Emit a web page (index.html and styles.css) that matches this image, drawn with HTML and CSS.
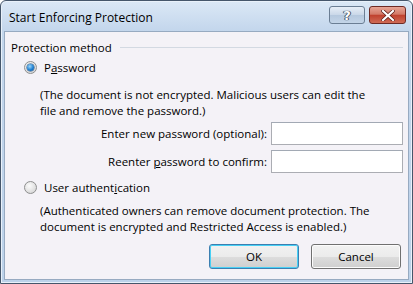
FILE: index.html
```html
<!DOCTYPE html>
<html>
<head>
<meta charset="utf-8">
<link rel="stylesheet" href="styles.css">
</head>
<body>
<div class="window">
  <div class="titlebar">
    <span class="title">Start Enforcing Protection</span>
    <div class="caption-buttons">
      <div class="cbtn help">?</div>
      <div class="cbtn close">
        <svg width="14" height="11" viewBox="0 0 14 11"><path d="M2 1 L12 10 M12 1 L2 10" stroke="#5a1a14" stroke-width="3.6" stroke-linecap="square"/><path d="M2 1 L12 10 M12 1 L2 10" stroke="#fff" stroke-width="2.2" stroke-linecap="square"/></svg>
      </div>
    </div>
  </div>
  <div class="content">
    <div class="group-head"><span>Protection method</span><div class="rule"></div></div>
    <div class="radio-row first"><span class="radio checked"></span><span>P<u>a</u>ssword</span></div>
    <p class="desc first-desc">(The document is not encrypted. Malicious users can edit the<br>file and remove the password.)</p>
    <div class="field-row"><label>Enter new password (optional):</label><div class="input"></div></div>
    <div class="field-row"><label>Reenter <u>p</u>assword to confirm:</label><div class="input"></div></div>
    <div class="radio-row"><span class="radio"></span><span>User authent<u>i</u>cation</span></div>
    <p class="desc">(Authenticated owners can remove document protection. The<br>document is encrypted and Restricted Access is enabled.)</p>
    <div class="buttons">
      <div class="btn default">OK</div>
      <div class="btn">Cancel</div>
    </div>
  </div>
</div>
</body>
</html>
```
FILE: styles.css
```css
html, body { margin: 0; padding: 0; background: #fff; }
body { font-family: "Open Sans", "Noto Sans", sans-serif; font-size: 11.5px; color: #000; }
.window {
  width: 413px; height: 284px; box-sizing: border-box;
  border: 1px solid #45566b; border-radius: 6px 6px 0 0;
  background: linear-gradient(#dbe8f6, #c3d6ec 30px, #bcd2ea);
  padding: 0 3px 3px 3px;
  display: flex; flex-direction: column;
  box-shadow: inset 0 0 0 1px #e9f1fa;
}
.titlebar { height: 30px; display: flex; align-items: center; padding-left: 5px; flex: none; }
.title { font-size: 12px; color: #000; margin-top: 2px; }
.caption-buttons { margin-left: auto; display: flex; gap: 4px; margin-right: 3px; margin-bottom: 2px; }
.cbtn {
  height: 18px; box-sizing: border-box; border: 1px solid #6b7e94; border-radius: 3px;
  display: flex; align-items: center; justify-content: center;
}
.help {
  width: 36px;
  background: linear-gradient(#e7eef7, #c9d7e8 50%, #b5c8de 51%, #c4d5e8);
  color: #fff; font-weight: bold; font-size: 13px; font-family: "DejaVu Sans", sans-serif;
  text-shadow: 0 0 1px #3d4d60, 0 0 1px #3d4d60, 1px 0 0 #4a5a6e, -1px 0 0 #4a5a6e;
}
.close {
  width: 37px; border-color: #6e2a24;
  background: linear-gradient(#e7a596, #d37a68 45%, #c0422f 52%, #cf6b55);
}
.content {
  flex: 1; background: #f4f2f7; border: 1px solid #97aac1;
  padding: 6px 0 0 6px; box-sizing: border-box;
}
.group-head { display: flex; align-items: center; height: 18px; }
.rule { flex: 1; height: 1px; background: #d3d9e2; margin: 1px 5px 0 8px; }
.radio-row { display: flex; align-items: center; height: 18px; padding-left: 13px; margin-top: 5px; }
.radio-row.first { margin-top: 2px; }
.radio {
  width: 13px; height: 13px; box-sizing: border-box; border-radius: 50%;
  border: 1px solid #8e8f8f; margin-right: 7px;
  background: radial-gradient(circle at 40% 35%, #fbfbfb, #dcdcdc 70%, #c8c8c8);
  position: relative;
}
.radio.checked::after {
  content: ""; position: absolute; left: 2px; top: 2px; width: 7px; height: 7px; border-radius: 50%;
  background: radial-gradient(circle at 40% 35%, #9ed7f9, #1f7fd1 55%, #0b4c91);
  box-shadow: 0 0 0 0.5px #24507d;
}
.desc { margin: 7px 0 0 29px; line-height: 16px; }
.desc.first-desc { margin-top: 11px; }
.field-row { display: flex; align-items: center; justify-content: flex-end; padding-right: 5px; height: 24px; margin-top: 2px; }
.field-row + .field-row { margin-top: 4px; }
.field-row label { margin-right: 4px; }
.input { width: 132px; height: 23px; box-sizing: border-box; background: #fff; border: 1px solid #abadb3; border-top-color: #a2a9b4; }
.buttons { display: flex; justify-content: flex-end; gap: 12px; padding-right: 7px; margin-top: 9px; }
.btn {
  width: 90px; height: 25px; box-sizing: border-box; border: 1px solid #707070; border-radius: 3px;
  background: linear-gradient(#f2f2f2, #ebebeb 50%, #dddddd 51%, #cfcfcf);
  display: flex; align-items: center; justify-content: center;
  box-shadow: inset 0 0 0 1px #fcfcfc;
}
.btn.default { border-color: #3c7fb1; box-shadow: inset 0 0 0 1px #48d0f5; }
```
